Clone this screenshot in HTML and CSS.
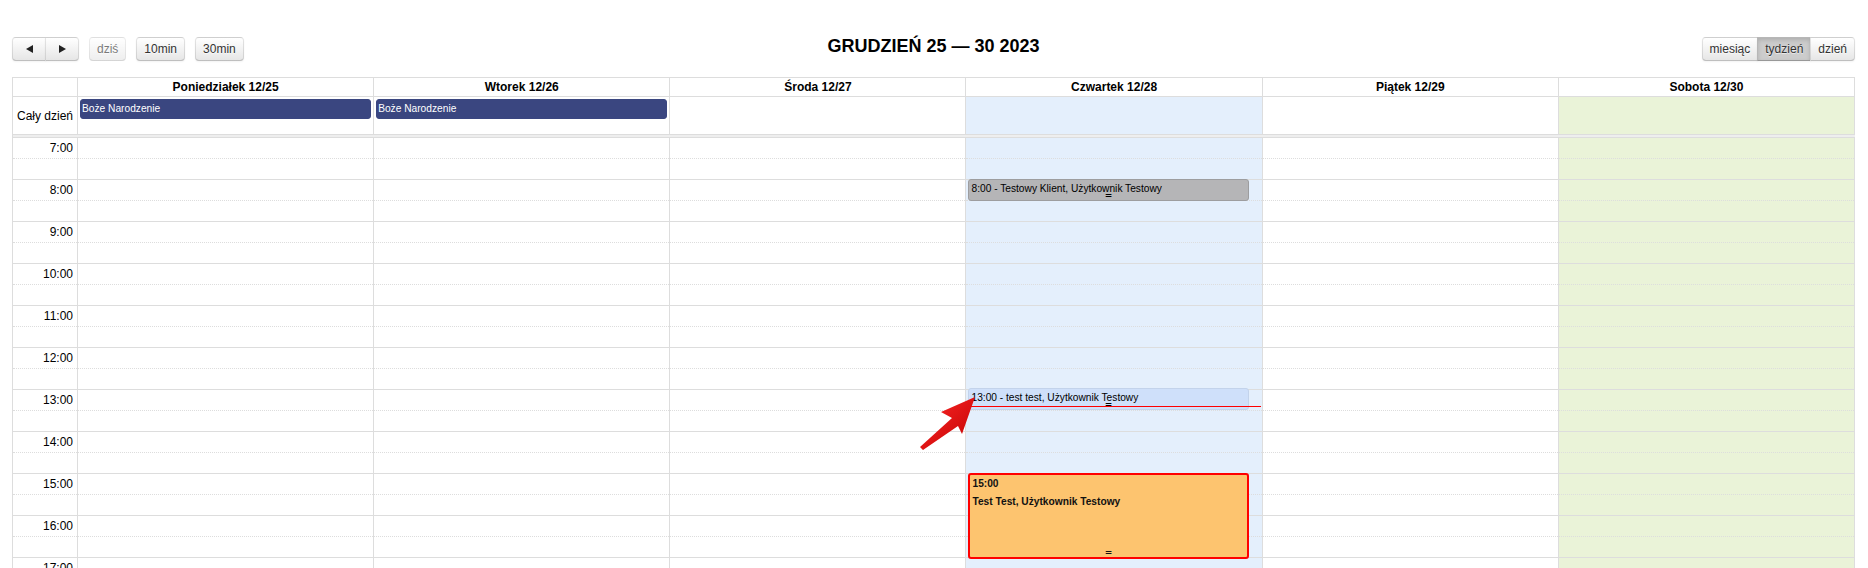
FILE: index.html
```html
<!DOCTYPE html>
<html lang="pl">
<head>
<meta charset="utf-8">
<title>Kalendarz</title>
<link rel="stylesheet" href="styles.css">
</head>
<body>
<div class="page">
  <div class="toolbar">
    <div class="tb-left">
      <div class="btn-group">
        <button class="btn btn-icon"><svg width="7" height="8" viewBox="0 0 7 8"><polygon points="7,0 7,8 0,4"/></svg></button>
        <button class="btn btn-icon"><svg width="7" height="8" viewBox="0 0 7 8"><polygon points="0,0 7,4 0,8"/></svg></button>
      </div>
      <button class="btn disabled">dziś</button>
      <button class="btn">10min</button>
      <button class="btn">30min</button>
    </div>
    <h2 class="title">GRUDZIEŃ 25 — 30 2023</h2>
    <div class="tb-right">
      <div class="btn-group">
        <button class="btn">miesiąc</button>
        <button class="btn active">tydzień</button>
        <button class="btn">dzień</button>
      </div>
    </div>
  </div>

  <div class="cal">
    <div class="row head">
      <div class="cell axis"></div>
      <div class="cell">Poniedziałek 12/25</div>
      <div class="cell">Wtorek 12/26</div>
      <div class="cell">Środa 12/27</div>
      <div class="cell">Czwartek 12/28</div>
      <div class="cell">Piątek 12/29</div>
      <div class="cell">Sobota 12/30</div>
    </div>
    <div class="row allday">
      <div class="cell axis">Cały dzień</div>
      <div class="cell"><div class="ad-ev">Boże Narodzenie</div></div>
      <div class="cell"><div class="ad-ev">Boże Narodzenie</div></div>
      <div class="cell"></div>
      <div class="cell today"></div>
      <div class="cell"></div>
      <div class="cell sat"></div>
    </div>
    <div class="divider"></div>
    <div class="row tgrid">
      <div class="col axis">
        <div class="slot">7:00</div><div class="slot h"></div>
        <div class="slot">8:00</div><div class="slot h"></div>
        <div class="slot">9:00</div><div class="slot h"></div>
        <div class="slot">10:00</div><div class="slot h"></div>
        <div class="slot">11:00</div><div class="slot h"></div>
        <div class="slot">12:00</div><div class="slot h"></div>
        <div class="slot">13:00</div><div class="slot h"></div>
        <div class="slot">14:00</div><div class="slot h"></div>
        <div class="slot">15:00</div><div class="slot h"></div>
        <div class="slot">16:00</div><div class="slot h"></div>
        <div class="slot">17:00</div><div class="slot h"></div>
      </div>
      <div class="col">
        <div class="slot"></div><div class="slot h"></div><div class="slot"></div><div class="slot h"></div>
        <div class="slot"></div><div class="slot h"></div><div class="slot"></div><div class="slot h"></div>
        <div class="slot"></div><div class="slot h"></div><div class="slot"></div><div class="slot h"></div>
        <div class="slot"></div><div class="slot h"></div><div class="slot"></div><div class="slot h"></div>
        <div class="slot"></div><div class="slot h"></div><div class="slot"></div><div class="slot h"></div>
        <div class="slot"></div><div class="slot h"></div>
      </div>
      <div class="col">
        <div class="slot"></div><div class="slot h"></div><div class="slot"></div><div class="slot h"></div>
        <div class="slot"></div><div class="slot h"></div><div class="slot"></div><div class="slot h"></div>
        <div class="slot"></div><div class="slot h"></div><div class="slot"></div><div class="slot h"></div>
        <div class="slot"></div><div class="slot h"></div><div class="slot"></div><div class="slot h"></div>
        <div class="slot"></div><div class="slot h"></div><div class="slot"></div><div class="slot h"></div>
        <div class="slot"></div><div class="slot h"></div>
      </div>
      <div class="col">
        <div class="slot"></div><div class="slot h"></div><div class="slot"></div><div class="slot h"></div>
        <div class="slot"></div><div class="slot h"></div><div class="slot"></div><div class="slot h"></div>
        <div class="slot"></div><div class="slot h"></div><div class="slot"></div><div class="slot h"></div>
        <div class="slot"></div><div class="slot h"></div><div class="slot"></div><div class="slot h"></div>
        <div class="slot"></div><div class="slot h"></div><div class="slot"></div><div class="slot h"></div>
        <div class="slot"></div><div class="slot h"></div>
      </div>
      <div class="col today">
        <div class="slot"></div><div class="slot h"></div><div class="slot"></div><div class="slot h"></div>
        <div class="slot"></div><div class="slot h"></div><div class="slot"></div><div class="slot h"></div>
        <div class="slot"></div><div class="slot h"></div><div class="slot"></div><div class="slot h"></div>
        <div class="slot"></div><div class="slot h"></div><div class="slot"></div><div class="slot h"></div>
        <div class="slot"></div><div class="slot h"></div><div class="slot"></div><div class="slot h"></div>
        <div class="slot"></div><div class="slot h"></div>
        <div class="tev gray">8:00 - Testowy Klient, Użytkownik Testowy<div class="resizer">=</div></div>
        <div class="tev blue">13:00 - test test, Użytkownik Testowy<div class="resizer">=</div></div>
        <div class="tev orange"><div class="ev-time">15:00</div><div class="ev-title">Test Test, Użytkownik Testowy</div><div class="resizer">=</div></div>
        <div class="nowline"></div>
      </div>
      <div class="col">
        <div class="slot"></div><div class="slot h"></div><div class="slot"></div><div class="slot h"></div>
        <div class="slot"></div><div class="slot h"></div><div class="slot"></div><div class="slot h"></div>
        <div class="slot"></div><div class="slot h"></div><div class="slot"></div><div class="slot h"></div>
        <div class="slot"></div><div class="slot h"></div><div class="slot"></div><div class="slot h"></div>
        <div class="slot"></div><div class="slot h"></div><div class="slot"></div><div class="slot h"></div>
        <div class="slot"></div><div class="slot h"></div>
      </div>
      <div class="col sat">
        <div class="slot"></div><div class="slot h"></div><div class="slot"></div><div class="slot h"></div>
        <div class="slot"></div><div class="slot h"></div><div class="slot"></div><div class="slot h"></div>
        <div class="slot"></div><div class="slot h"></div><div class="slot"></div><div class="slot h"></div>
        <div class="slot"></div><div class="slot h"></div><div class="slot"></div><div class="slot h"></div>
        <div class="slot"></div><div class="slot h"></div><div class="slot"></div><div class="slot h"></div>
        <div class="slot"></div><div class="slot h"></div>
      </div>
    </div>
  </div>

  <svg class="arrow" width="66" height="64" viewBox="0 0 66 64">
    <defs>
      <linearGradient id="ag" x1="0" y1="0" x2="1" y2="1">
        <stop offset="0" stop-color="#ff2a2a"/>
        <stop offset="1" stop-color="#c00000"/>
      </linearGradient>
    </defs>
    <polygon points="60,7 26,22 37,28 5,57 8,60 43,36 47,44" fill="url(#ag)"/>
  </svg>
</div>
</body>
</html>
```

FILE: styles.css
```css
html, body {
  height: 568px;
  overflow: hidden;
}

body {
  margin: 0;
  background: #fff;
  color: #000;
  font-family: "Liberation Sans", Arial, sans-serif;
  font-size: 12px;
}

.page {
  position: relative;
  padding: 37px 13px 0 12px;
}

/* ---------- toolbar ---------- */
.toolbar {
  display: grid;
  grid-template-columns: 1fr auto 1fr;
  align-items: start;
  height: 24px;
  margin-bottom: 16px;
}

.tb-left {
  display: flex;
  gap: 10px;
}

.tb-right {
  display: flex;
  justify-content: flex-end;
}

.title {
  margin: -1px 0 0;
  font-size: 18px;
  line-height: 20px;
  font-weight: bold;
  color: #000;
}

.btn-group {
  display: flex;
}

.btn {
  display: inline-flex;
  align-items: center;
  justify-content: center;
  box-sizing: border-box;
  height: 24px;
  margin: 0;
  padding: 0 7px;
  font-family: "Liberation Sans", Arial, sans-serif;
  font-size: 12px;
  color: #333;
  background-color: #f5f5f5;
  background-image: linear-gradient(to bottom, #fff, #e6e6e6);
  border: 1px solid;
  border-color: rgba(0,0,0,.1) rgba(0,0,0,.1) rgba(0,0,0,.25);
  border-radius: 4px;
  text-shadow: 0 1px 1px rgba(255,255,255,.75);
  box-shadow: inset 0 1px 0 rgba(255,255,255,.2), 0 1px 2px rgba(0,0,0,.05);
}

.btn-group .btn {
  border-radius: 0;
}

.btn-group .btn + .btn {
  margin-left: -1px;
}

.btn-group .btn:first-child {
  border-radius: 4px 0 0 4px;
}

.btn-group .btn:last-child {
  border-radius: 0 4px 4px 0;
}

.btn-icon {
  width: 34px;
  padding: 0;
}

.btn-icon svg {
  fill: #222;
}

.btn.disabled {
  opacity: .65;
  box-shadow: none;
}

.btn.active {
  background-color: #ccc;
  background-image: none;
  box-shadow: inset 0 2px 4px rgba(0,0,0,.15), 0 1px 2px rgba(0,0,0,.05);
}

/* ---------- calendar ---------- */
.cal {
  width: 1843px;
  box-sizing: border-box;
  border-left: 1px solid #ddd;
  border-top: 1px solid #ddd;
}

.row {
  display: grid;
  grid-template-columns: 65px repeat(6, 1fr);
}

.cell,
.col {
  box-sizing: border-box;
  border-right: 1px solid #ddd;
  min-width: 0;
}

.head .cell {
  height: 19px;
  border-bottom: 1px solid #ddd;
  line-height: 18px;
  text-align: center;
  font-weight: bold;
}

.allday .cell {
  height: 37px;
}

.allday .cell.axis {
  display: flex;
  align-items: center;
  justify-content: flex-end;
  padding: 0 4px 0 0;
  white-space: nowrap;
}

.today {
  background: #e4effc;
}

.sat {
  background: #eaf3d8;
}

.ad-ev {
  box-sizing: border-box;
  height: 20px;
  margin: 2px 2px 0;
  padding: 2px 1px 0;
  border: 1px solid #3a4680;
  border-radius: 3px;
  background: #3a4680;
  color: #fff;
  font-size: 10.2px;
  line-height: 14px;
  white-space: nowrap;
  overflow: hidden;
}

.divider {
  box-sizing: border-box;
  height: 4px;
  border-top: 1px solid #ddd;
  border-bottom: 1px solid #ddd;
  background: #eee;
}

.slot {
  box-sizing: border-box;
  height: 21px;
  border-bottom: 1px dotted #ddd;
}

.slot.h {
  border-bottom-style: solid;
}

.col.axis .slot {
  padding-right: 4px;
  line-height: 20px;
  text-align: right;
  white-space: nowrap;
}

.col.today {
  position: relative;
}

/* ---------- timed events ---------- */
.tev {
  position: absolute;
  left: 2px;
  right: 13px;
  box-sizing: border-box;
  padding: 2px 2px 0;
  border: 1px solid;
  border-radius: 3px;
  font-size: 10.2px;
  line-height: 13px;
  color: #000;
  white-space: nowrap;
  overflow: hidden;
}

.tev.gray {
  top: 41px;
  height: 22px;
  background: #b5b5b7;
  border-color: #9d9d9f;
}

.tev.blue {
  top: 250px;
  height: 22px;
  background: #cfe0fa;
  border-color: #c3d3eb;
}

.tev.orange {
  top: 335px;
  height: 86px;
  background: #fdc46f;
  border: 2px solid #f00;
  font-weight: bold;
  color: #111;
  white-space: normal;
}

.ev-title {
  margin-top: 5px;
}

.resizer {
  position: absolute;
  left: 0;
  right: 0;
  bottom: 0;
  height: 8px;
  overflow: hidden;
  font-family: "DejaVu Sans Mono", monospace;
  font-size: 11px;
  font-weight: normal;
  line-height: 8px;
  text-align: center;
}

.nowline {
  position: absolute;
  left: 1px;
  right: 1px;
  top: 268px;
  height: 1px;
  background: #f00;
  z-index: 2;
}

/* annotation arrow */
.arrow {
  position: absolute;
  left: 915px;
  top: 390px;
  z-index: 3;
}
```
